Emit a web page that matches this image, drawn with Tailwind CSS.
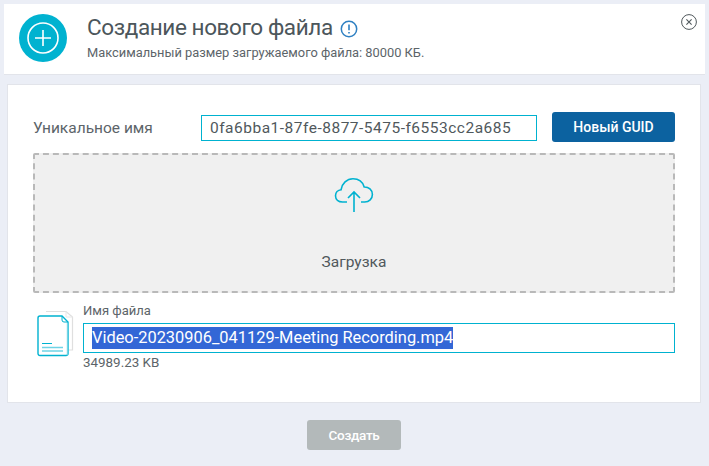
<!DOCTYPE html>
<html lang="ru">
<head>
    <meta charset="UTF-8">
    <title>Создание нового файла</title>
    <script src="https://cdn.jsdelivr.net/npm/@tailwindcss/browser@4"></script>
</head>
<body class="bg-[#ebeef6] font-['Roboto',sans-serif] text-[#50585c] w-[709px] h-[466px] overflow-hidden">
    <!-- Header -->
    <header class="mx-1 mt-1 h-[71px] bg-white border-b border-[#e2e4ea] flex relative">
        <div class="ml-[15px] mt-[10px] w-12 h-12 rounded-full bg-[#00b2d0] flex items-center justify-center shrink-0">
            <svg class="w-8 h-8" viewBox="0 0 32 32" fill="none" stroke="#fff">
                <circle cx="16" cy="16" r="15" stroke-width="1.6"/>
                <path d="M16 8v16M8 16h16" stroke-width="1.6"/>
            </svg>
        </div>
        <div class="ml-5 mt-[7px]">
            <div class="flex items-center">
                <h1 class="text-[22.5px] leading-[32px] text-[#4c565b] tracking-[-0.4px]">Создание нового файла</h1>
                <svg class="w-[18px] h-[18px] ml-[7px] mt-[3px]" viewBox="0 0 18 18" fill="none" stroke="#2f80c2">
                    <circle cx="9" cy="9" r="7.7" stroke-width="1.5"/>
                    <path d="M9 4.500v5.800M9 12v1.600" stroke-width="1.6"/>
                </svg>
            </div>
            <p class="text-[12.85px] leading-4 mt-[2px] text-[#5c6469]">Максимальный размер загружаемого файла: 80000 КБ.</p>
        </div>
        <svg class="absolute right-[8px] top-[10px] w-4 h-4" viewBox="0 0 16 16" fill="none" stroke="#50585c">
            <circle cx="8" cy="8" r="7.4" stroke-width="1"/>
            <path d="M5.4 5.4l5.2 5.2M10.6 5.4l-5.2 5.2" stroke-width="1.1"/>
        </svg>
    </header>

    <!-- Card -->
    <main class="ml-[7px] mr-2 mt-[9px] h-[319px] bg-white border border-[#e2e4ea] pl-[25px] pr-[25px] pt-[27px]">
        <div class="flex items-start h-[32px]">
            <label class="w-[168px] mt-[5px] text-[15.5px] text-[#5c6469]">Уникальное имя</label>
            <div class="w-[336px] h-[26px] mt-[3px] border border-[#00b2d0] pl-[8px] text-[15.5px] leading-[24px] tracking-[0.5px] text-[#50585c] whitespace-nowrap">0fa6bba1-87fe-8877-5475-f6553cc2a685</div>
            <button class="ml-[15px] w-[123px] h-[30px] rounded-[3px] bg-[#0c62a0] text-white text-[14px] font-medium">Новый GUID</button>
        </div>

        <!-- Upload area -->
        <div class="mt-[9px] h-[140px] bg-[#f0f0f0] border-2 border-dashed border-[#b9b9b9] rounded-[2px] flex flex-col items-center">
            <svg class="w-10 h-9 mt-[22px]" viewBox="0 0 40 36" fill="none" stroke="#00b2d0" stroke-width="1.6">
                <path d="M13 25H8.500C4.500 25 1.500 22.500 1.500 18.800c0-3.300 2.400-5.800 5.600-6.100C8 6.500 12.800 1.800 19 1.800c5.600 0 9.800 3.400 11.200 8.200 4.400-.2 8.200 2.900 8.200 7.500 0 4.300-3.300 7.500-7.700 7.500H27"/>
                <path d="M20 35V15M14 21l6-6 6 6"/>
            </svg>
            <span class="mt-[38px] text-[15.5px] text-[#50585c]">Загрузка</span>
        </div>

        <!-- File row -->
        <div class="flex mt-[10px]">
            <svg class="w-[37px] h-[47px] ml-[4px] mt-[7px] shrink-0" viewBox="0 0 37 47" fill="none">
                <path d="M9 1.500h20l6.500 5.500v33h-4" stroke="#dfdfdf" stroke-width="1.2"/>
                <path d="M29 1.500v5.500h6.500" stroke="#e8e8e8" stroke-width="1"/>
                <path d="M3 6h22l6 6v31.500a2 2 0 0 1-2 2H3a2 2 0 0 1-2-2V8a2 2 0 0 1 2-2z" fill="#fff" stroke="#00b2d0" stroke-width="1.4"/>
                <path d="M30.300 12.500v33" stroke="#7fd8e7" stroke-width="1"/>
                <path d="M25 6v4a2 2 0 0 0 2 2h4" stroke="#00b2d0" stroke-width="1"/>
                <path d="M5 33.500h10" stroke="#00b2d0" stroke-width="1"/>
                <path d="M5 37.500h21M5 41h21" stroke="#6fd3e5" stroke-width="1.500"/>
            </svg>
            <div class="ml-[9px] flex-1">
                <div class="text-[13px] leading-4 text-[#5c6469]">Имя файла</div>
                <div class="mt-[4px] h-[30px] border border-[#00b2d0] pl-2 flex items-center text-[16.4px]">
                    <span class="bg-[#3367d6] text-white leading-[22px] whitespace-nowrap">Video-20230906_041129-Meeting Recording.mp4</span>
                </div>
                <div class="mt-[2px] text-[13.4px] leading-4 text-[#5c6469]">34989.23 KB</div>
            </div>
        </div>
    </main>

    <!-- Footer -->
    <div class="flex justify-center mt-[17px]">
        <button class="ml-[-1px] w-[94px] h-[30px] rounded-[3px] bg-[#b3b9ba] text-white text-[13.5px] tracking-[-0.3px] font-medium">Создать</button>
    </div>
</body>
</html>
